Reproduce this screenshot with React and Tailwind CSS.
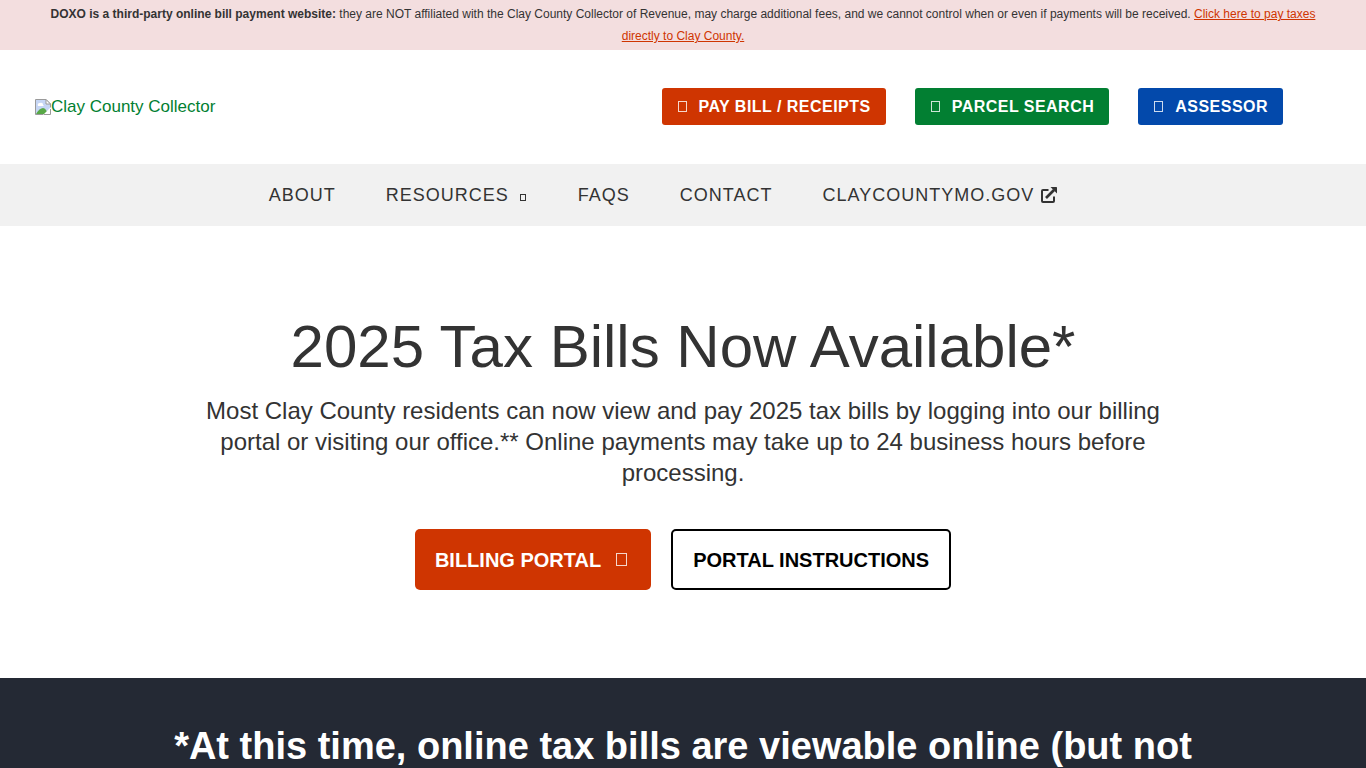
const headerButtons = [
    { label: 'PAY BILL / RECEIPTS', color: 'bg-[#cf3501]' },
    { label: 'PARCEL SEARCH', color: 'bg-[#027f32]' },
    { label: 'ASSESSOR', color: 'bg-[#0349ab]' },
];

const navLinks = [
    { label: 'ABOUT' },
    { label: 'RESOURCES', menu: true },
    { label: 'FAQS' },
    { label: 'CONTACT' },
    { label: 'CLAYCOUNTYMO.GOV', external: true },
];

const ExternalIcon = () => (
    <svg width="16" height="16" viewBox="0 0 16 16" fill="none" aria-hidden="true">
        <path d="M7.5 3H2Q1 3 1 4V14Q1 15 2 15H12Q13 15 13 14V9.5" stroke="#333" strokeWidth="2" />
        <path d="M5 11L13 3" stroke="#333" strokeWidth="2.6" />
        <path d="M9.5 0H15.4Q16 0 16 .6V6.5Z" fill="#333" />
    </svg>
);

const LogoIcon = () => (
    <svg width="16" height="16" viewBox="0 0 16 16" fill="none" aria-hidden="true">
        <path d="M.5 .5H11L15.5 5V15.5H.5Z" fill="#c6d6f5" stroke="#9a9a9a" />
        <path d="M3 7a2 2 0 0 1 2-3 2 2 0 0 1 3 2l1 1Z" fill="#fff" />
        <path d="M1 15C3 11 6 9 8 9s4 3 5 6Z" fill="#58a846" />
        <path d="M16 8L8 16H16Z" fill="#fff" />
        <path d="M9 15.5H15.5V10" stroke="#9a9a9a" />
        <path d="M11 .5V5H15.5Z" fill="#fff" stroke="#9a9a9a" />
    </svg>
);

const Banner = () => (
    <div className="bg-[#f3dedf] px-9 py-[3px] text-center text-[12px] leading-[22px]">
        <strong>DOXO is a third-party online bill payment website:</strong> they are NOT affiliated with the
        Clay County Collector of Revenue, may charge additional fees, and we cannot control when or even if
        payments will be received.{' '}
        <a href="#pay" className="text-[#cf3501] underline">
            Click here to pay taxes directly to Clay County.
        </a>
    </div>
);

const Header = () => (
    <header className="flex items-center justify-between pt-[38px] pr-[83px] pb-[39px] pl-[35px]">
        <a href="#home" className="flex items-center text-[17px] leading-[26px] text-[#027f32]">
            <LogoIcon />
            Clay County Collector
        </a>
        <div className="flex gap-[29px]">
            {headerButtons.map(({ label, color }) => (
                <button
                    key={label}
                    className={`${color} flex h-[37px] items-center gap-3 rounded-[3px] pr-[15px] pl-4 text-base font-bold tracking-[0.03em] text-white`}
                >
                    <span className="h-[11px] w-[9px] border border-white/80" />
                    {label}
                </button>
            ))}
        </div>
    </header>
);

const Nav = () => (
    <nav className="flex justify-center gap-[50px] bg-[#f1f1f1] pr-10 text-[18px] leading-[62px] tracking-[1px]">
        {navLinks.map(({ label, menu, external }) => (
            <a key={label} href={`#${label.toLowerCase()}`} className="flex items-center gap-[7px]">
                {label}
                {menu && <span className="mt-1 mr-[2px] ml-1 h-[7px] w-[6px] border border-[#333]" />}
                {external && <ExternalIcon />}
            </a>
        ))}
    </nav>
);

const Hero = () => (
    <section className="mx-auto max-w-[1000px] px-5 pt-[86px] pb-[88px] text-center">
        <h1 className="text-[60px] leading-[70px]">2025 Tax Bills Now Available*</h1>
        <p className="mt-[13px] text-2xl leading-[31px]">
            Most Clay County residents can now view and pay 2025 tax bills by logging into our billing portal
            or visiting our office.** Online payments may take up to 24 business hours before processing.
        </p>
        <div className="mt-[41px] flex justify-center gap-5 text-[20px] font-bold">
            <button className="flex h-[61px] items-center gap-[15px] rounded-[5px] bg-[#cf3501] pr-6 pl-5 text-white">
                BILLING PORTAL
                <span className="h-[13px] w-[11px] border border-white/80" />
            </button>
            <button className="h-[61px] rounded-[5px] border-2 border-black px-5 text-black">
                PORTAL INSTRUCTIONS
            </button>
        </div>
    </section>
);

const Notice = () => (
    <section className="bg-[#242934] px-5 pt-[44px] text-center text-white">
        <h2 className="text-[38px] leading-[48px] font-bold">
            *At this time, online tax bills are viewable online (but not
        </h2>
    </section>
);

export default function App() {
    return (
        <div className="bg-white font-['Liberation_Sans',Arial,sans-serif] text-[#333]">
            <Banner />
            <Header />
            <Nav />
            <main>
                <Hero />
                <Notice />
            </main>
        </div>
    );
}
